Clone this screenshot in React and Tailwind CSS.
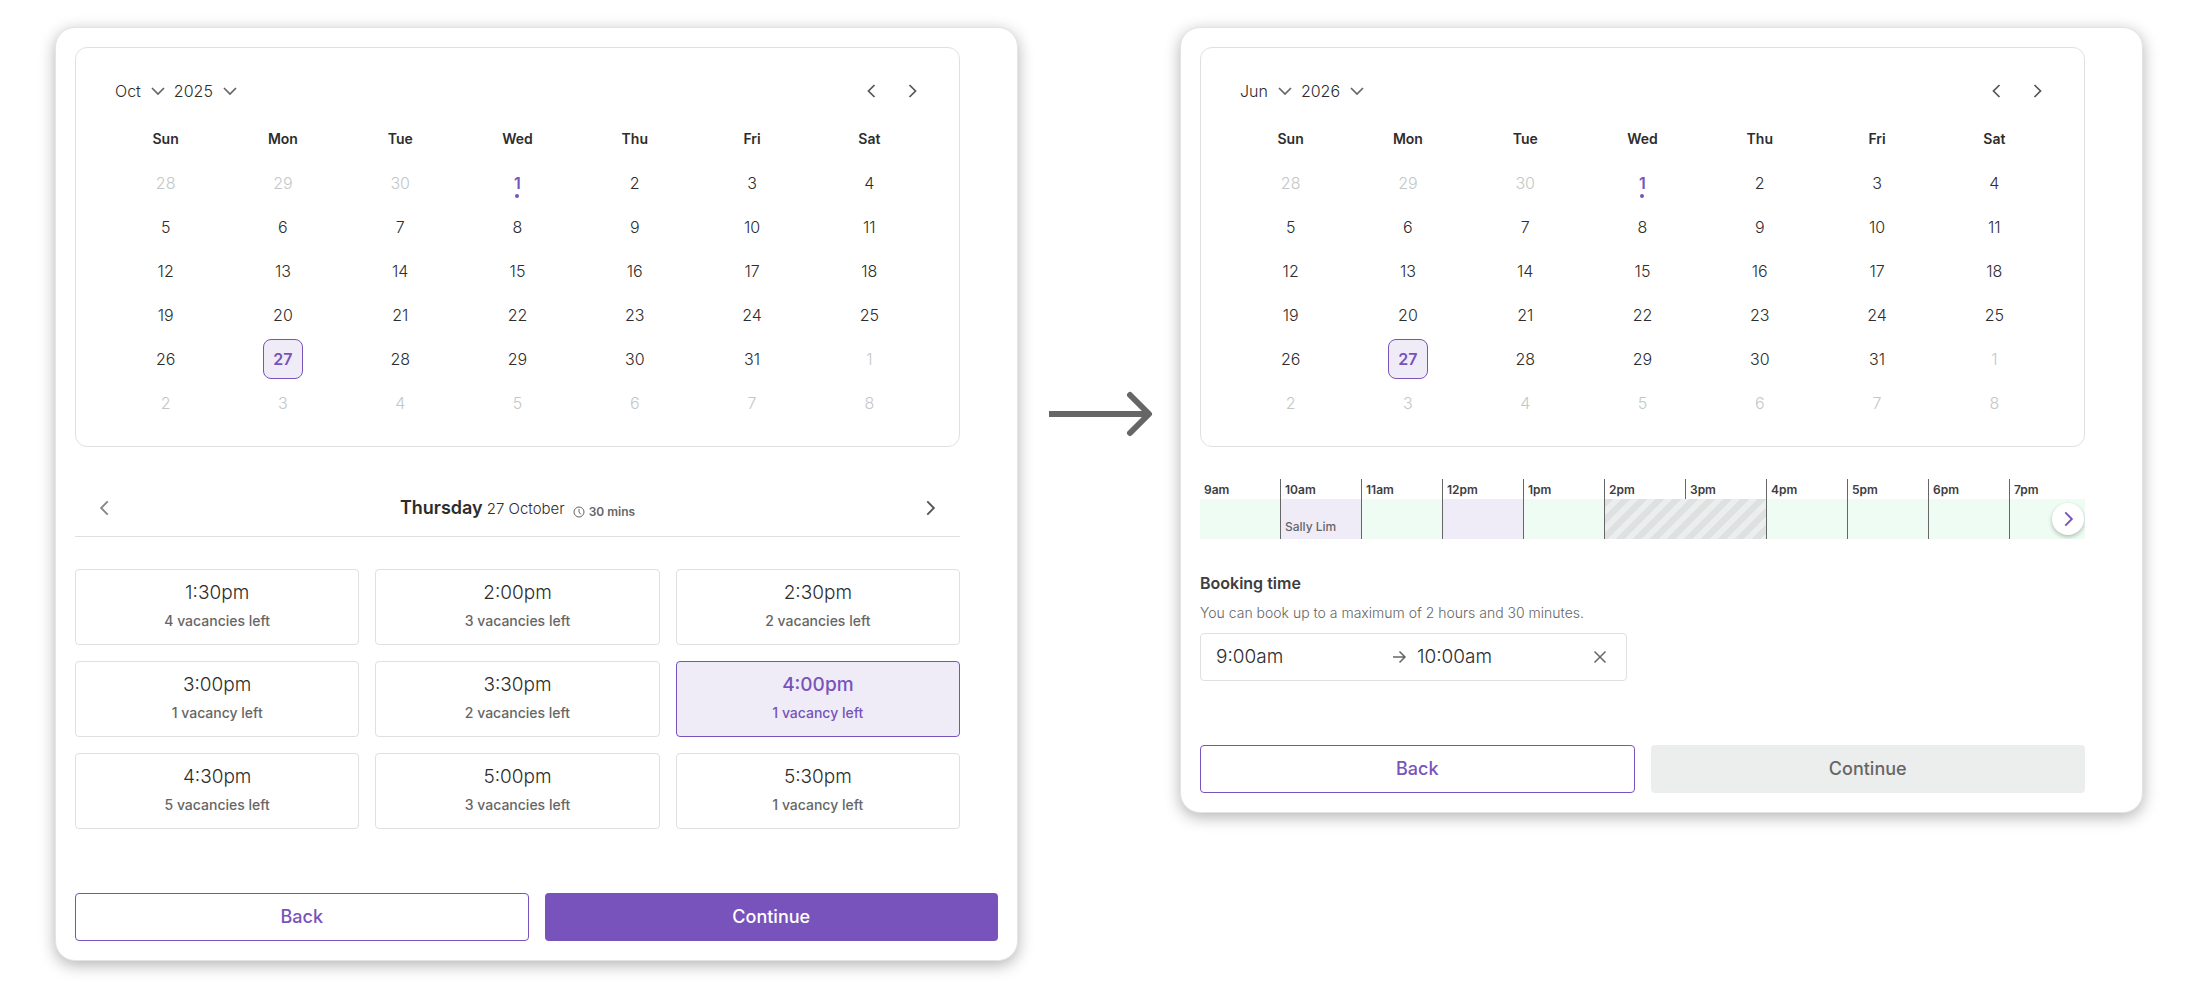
import { useState } from "react";
import clsx from "clsx";

const WEEKDAYS = ["Sun", "Mon", "Tue", "Wed", "Thu", "Fri", "Sat"];
const MONTHS = ["Jan", "Feb", "Mar", "Apr", "May", "Jun", "Jul", "Aug", "Sep", "Oct", "Nov", "Dec"];
const YEARS = ["2024", "2025", "2026", "2027"];

// Six weeks, starting on the 28th of the previous month
const WEEKS = Array.from({ length: 6 }, (_, week) =>
  Array.from({ length: 7 }, (_, weekday) => {
    const offset = week * 7 + weekday - 2;
    if (offset < 1) return { day: offset + 30, outside: true };
    if (offset > 31) return { day: offset - 31, outside: true };
    return { day: offset, outside: false };
  })
);

const SLOTS = [
  { time: "1:30pm", left: 4 },
  { time: "2:00pm", left: 3 },
  { time: "2:30pm", left: 2 },
  { time: "3:00pm", left: 1 },
  { time: "3:30pm", left: 2 },
  { time: "4:00pm", left: 1 },
  { time: "4:30pm", left: 5 },
  { time: "5:00pm", left: 3 },
  { time: "5:30pm", left: 1 },
];

const HOURS = ["9am", "10am", "11am", "12pm", "1pm", "2pm", "3pm", "4pm", "5pm", "6pm", "7pm"];

const BLOCKS = [
  { id: 9, type: "free" },
  { id: 10, type: "booked", name: "Sally Lim" },
  { id: 11, type: "free" },
  { id: 12, type: "booked" },
  { id: 13, type: "free" },
  { id: 14, type: "closed" },
  { id: 16, type: "free" },
  { id: 17, type: "free" },
  { id: 18, type: "free" },
  { id: 19, type: "free" },
];

const BLOCK_STYLES = {
  free: "w-[81px] bg-[#eefcf3]",
  booked: "w-[81px] bg-[#f0ecf7]",
  closed:
    "w-[162px] bg-[repeating-linear-gradient(135deg,#dde1e2_0px,#dde1e2_6px,#eceeee_6px,#eceeee_12px)]",
};

function Chevron({ direction, className }) {
  const paths = {
    left: "M12.5 4 6.5 10l6 6",
    right: "M7.5 4l6 6-6 6",
    down: "M4 7l6 6 6-6",
  };
  return (
    <svg viewBox="0 0 20 20" className={className} fill="none" stroke="currentColor" aria-hidden="true">
      <path d={paths[direction]} strokeWidth="1.7" />
    </svg>
  );
}

function Picker({ label, options, value, onChange }) {
  return (
    <span className="relative inline-flex items-center">
      <select
        aria-label={label}
        value={value}
        onChange={(e) => onChange(e.target.value)}
        className="appearance-none field-sizing-content bg-transparent pr-[27px] text-base font-light text-[#2d2d2d]"
      >
        {options.map((option) => (
          <option key={option}>{option}</option>
        ))}
      </select>
      <Chevron direction="down" className="pointer-events-none absolute right-0 size-5 text-[#666]" />
    </span>
  );
}

function Calendar({ initialMonth, initialYear }) {
  const [month, setMonth] = useState(initialMonth);
  const [year, setYear] = useState(initialYear);
  const [selected, setSelected] = useState(27);

  return (
    <section className="rounded-xl border border-[#dde1e2] pt-5 pb-[21px]">
      <div className="mb-[3px] flex h-[46px] items-center justify-between pr-[27px] pl-[39px]">
        <div className="flex items-center gap-1.5">
          <Picker label="Month" options={MONTHS} value={month} onChange={setMonth} />
          <Picker label="Year" options={YEARS} value={year} onChange={setYear} />
        </div>
        <div className="flex text-[#555]">
          <button aria-label="Previous month" className="flex size-10 items-center justify-center">
            <Chevron direction="left" className="size-5" />
          </button>
          <button aria-label="Next month" className="flex size-10 items-center justify-center">
            <Chevron direction="right" className="size-5" />
          </button>
        </div>
      </div>

      <div className="px-[31px]">
        <table className="w-full table-fixed text-center">
          <thead>
            <tr>
              {WEEKDAYS.map((name) => (
                <th key={name} scope="col" className="h-11 p-0 text-sm font-semibold text-[#2d2d2d]">
                  {name}
                </th>
              ))}
            </tr>
          </thead>
          <tbody>
            {WEEKS.map((week, i) => (
              <tr key={i}>
                {week.map(({ day, outside }) => {
                  const isSelected = !outside && day === selected;
                  const isToday = !outside && day === 1;
                  return (
                    <td key={day} className="h-11 p-0">
                      <button
                        disabled={outside}
                        onClick={() => setSelected(day)}
                        className={clsx(
                          "relative mx-auto flex size-10 items-center justify-center rounded-lg text-base",
                          isSelected && "border border-[#7753bb] bg-[#f0ecf7] font-semibold text-[#7753bb]",
                          isToday && !isSelected && "font-semibold text-[#7753bb]",
                          outside && "font-light text-[#c4c7c8]",
                          !outside && !isSelected && !isToday && "font-light text-[#2d2d2d]"
                        )}
                      >
                        {day}
                        {isToday && <span className="absolute bottom-[5px] size-1 rounded-full bg-[#7753bb]" />}
                      </button>
                    </td>
                  );
                })}
              </tr>
            ))}
          </tbody>
        </table>
      </div>
    </section>
  );
}

function DayHeader() {
  return (
    <div className="mt-8 flex h-[58px] items-center justify-between border-b border-[#dde1e2] px-2.5">
      <button aria-label="Previous day" className="flex size-10 items-center justify-center text-[#888]">
        <Chevron direction="left" className="size-[22px]" />
      </button>
      <h2 className="flex items-end gap-1 text-[#2d2d2d]">
        <span className="text-lg leading-7 font-semibold">Thursday</span>
        <span className="text-[15px] leading-[26px] font-light">27 October</span>
        <span className="ml-1 flex items-center gap-1 text-xs leading-5 font-semibold text-[#666]">
          <svg viewBox="0 0 12 12" className="size-3" fill="none" stroke="currentColor" aria-hidden="true">
            <circle cx="6" cy="6" r="5" />
            <path d="M6 3v3l1.8 2.4" />
          </svg>
          30 mins
        </span>
      </h2>
      <button aria-label="Next day" className="flex size-10 items-center justify-center text-[#555]">
        <Chevron direction="right" className="size-[22px]" />
      </button>
    </div>
  );
}

function SlotGrid() {
  const [selected, setSelected] = useState("4:00pm");

  return (
    <div className="mt-8 grid grid-cols-3 gap-4">
      {SLOTS.map(({ time, left }) => {
        const active = time === selected;
        return (
          <button
            key={time}
            aria-pressed={active}
            onClick={() => setSelected(time)}
            className={clsx(
              "flex h-[76px] flex-col items-center justify-center gap-1 rounded border",
              active ? "border-[#7753bb] bg-[#f0ecf7] text-[#7753bb]" : "border-[#dde1e2] text-[#2d2d2d]"
            )}
          >
            <span className={clsx("text-[19px] leading-6", active ? "font-medium" : "font-light")}>{time}</span>
            <span className={clsx("text-sm leading-6 font-medium", !active && "text-[#666]")}>
              {left} {left === 1 ? "vacancy" : "vacancies"} left
            </span>
          </button>
        );
      })}
    </div>
  );
}

function Timeline() {
  return (
    <div className="relative mt-8 overflow-hidden">
      <div className="flex h-5 overflow-hidden">
        {HOURS.map((hour) => (
          <div
            key={hour}
            className="w-[81px] shrink-0 border-r border-[#666] pl-1 text-xs leading-[22px] font-semibold text-[#3d3d3d] last:w-auto last:flex-1 last:border-r-0"
          >
            {hour}
          </div>
        ))}
      </div>
      <div className="flex h-10">
        {BLOCKS.map(({ id, type, name }) => (
          <div
            key={id}
            className={clsx(
              "flex shrink-0 items-end border-r border-[#666] pb-1 pl-1 text-xs font-medium text-[#666] last:w-auto last:flex-1 last:border-r-0",
              BLOCK_STYLES[type]
            )}
          >
            {name}
          </div>
        ))}
      </div>
      <button
        aria-label="Later times"
        className="absolute right-px bottom-1 flex size-8 items-center justify-center rounded-full bg-white text-[#7753bb] shadow-[0_2px_4px_rgba(0,0,0,0.25)]"
      >
        <Chevron direction="right" className="size-[22px]" />
      </button>
    </div>
  );
}

function BookingTime() {
  const [start, setStart] = useState("9:00am");
  const [end, setEnd] = useState("10:00am");

  const handleClear = () => {
    setStart("");
    setEnd("");
  };

  return (
    <fieldset className="mt-8">
      <legend className="text-base leading-6 font-semibold text-[#3d3d3d]">Booking time</legend>
      <p className="mt-1.5 text-sm leading-6 font-light text-[#666]">
        You can book up to a maximum of 2 hours and 30 minutes.
      </p>
      <div className="mt-2 flex h-12 w-full max-w-[427px] items-center rounded border border-[#dde1e2] pr-4 pl-[15px] text-[19px] font-light text-[#2d2d2d]">
        <input
          aria-label="Start time"
          value={start}
          onChange={(e) => setStart(e.target.value)}
          className="w-[173px] min-w-0"
        />
        <svg viewBox="0 0 20 20" className="mr-2 size-5 shrink-0 text-[#666]" fill="none" stroke="currentColor" aria-hidden="true">
          <path d="M4 10h11.5M10.5 4.5 16 10l-5.5 5.5" strokeWidth="1.5" />
        </svg>
        <input
          aria-label="End time"
          value={end}
          onChange={(e) => setEnd(e.target.value)}
          className="min-w-0 flex-1"
        />
        <button aria-label="Clear times" onClick={handleClear} className="text-[#666]">
          <svg viewBox="0 0 20 20" className="size-5" fill="none" stroke="currentColor" aria-hidden="true">
            <path d="M4.5 4.5l11 11M15.5 4.5l-11 11" strokeWidth="1.5" />
          </svg>
        </button>
      </div>
    </fieldset>
  );
}

function Actions({ disabled }) {
  return (
    <div className="mt-16 grid grid-cols-2 gap-4 text-lg font-medium">
      <button className="h-12 rounded border border-[#7753bb] text-[#7753bb]">Back</button>
      <button
        disabled={disabled}
        className={clsx(
          "h-12 rounded",
          disabled ? "bg-[#eceeee] text-[#666]" : "bg-[#7753bb] text-white"
        )}
      >
        Continue
      </button>
    </div>
  );
}

function Panel({ children }) {
  return (
    <div className="min-w-0 flex-1 rounded-[20px] border border-[#e4e4e4] bg-white p-[19px] shadow-[0_4px_16px_rgba(0,0,0,0.3)]">
      {children}
    </div>
  );
}

export default function App() {
  return (
    <main className="flex min-h-screen items-start bg-white pt-[27px] pr-[57px] pb-8 pl-[55px] font-['Inter','Liberation_Sans',sans-serif]">
      <Panel>
        <div className="pr-[38px]">
          <Calendar initialMonth="Oct" initialYear="2025" />
          <DayHeader />
          <SlotGrid />
        </div>
        <Actions />
      </Panel>

      <div className="flex w-[162px] shrink-0 justify-center self-start pt-[363px] pl-1">
        <svg viewBox="0 0 104 48" className="h-12 w-[104px]" fill="none" stroke="#666" strokeWidth="6" aria-hidden="true">
          <path d="M0 24h99" />
          <path d="M81 5l19 19-19 19" strokeLinecap="round" strokeLinejoin="round" />
        </svg>
      </div>

      <Panel>
        <div className="pr-[38px]">
          <Calendar initialMonth="Jun" initialYear="2026" />
          <Timeline />
          <BookingTime />
          <Actions disabled />
        </div>
      </Panel>
    </main>
  );
}
